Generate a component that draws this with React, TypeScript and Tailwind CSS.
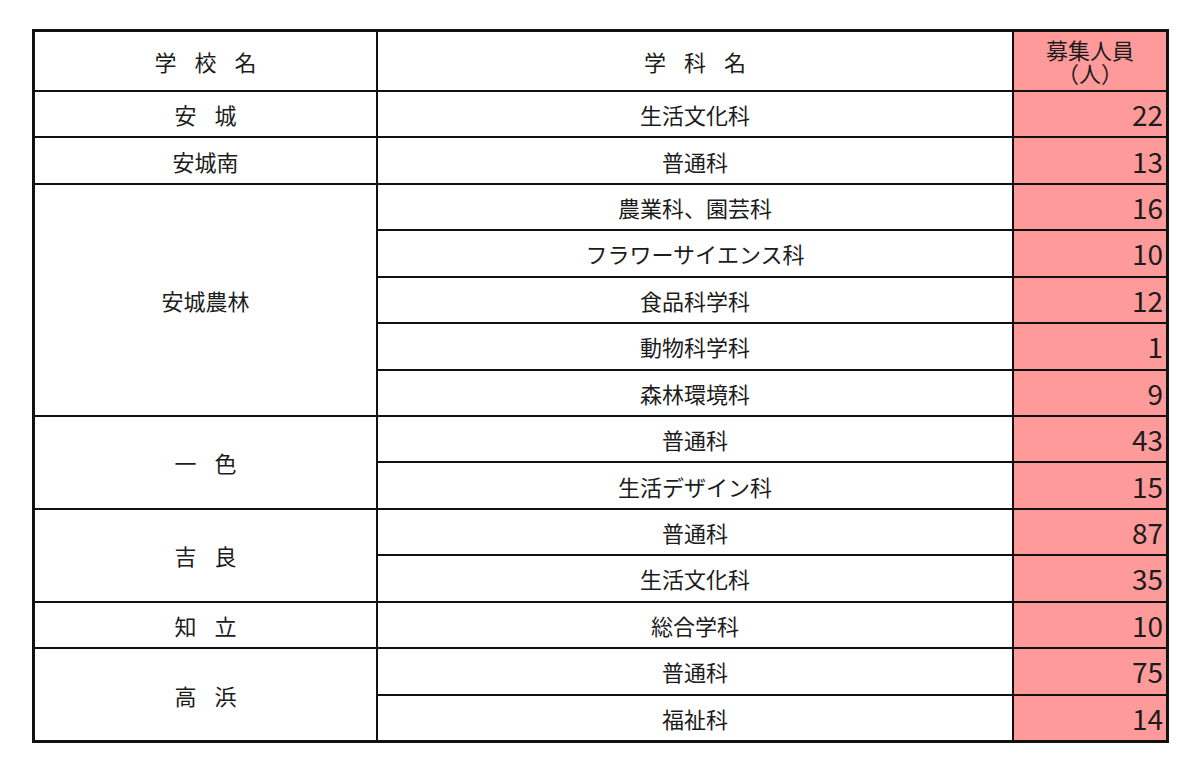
import React from 'react';

type Course = { name: string; count: number };
type School = { name: string; spaced?: boolean; courses: Course[] };

const schools: School[] = [
  { name: '安城', spaced: true, courses: [{ name: '生活文化科', count: 22 }] },
  { name: '安城南', courses: [{ name: '普通科', count: 13 }] },
  {
    name: '安城農林',
    courses: [
      { name: '農業科、園芸科', count: 16 },
      { name: 'フラワーサイエンス科', count: 10 },
      { name: '食品科学科', count: 12 },
      { name: '動物科学科', count: 1 },
      { name: '森林環境科', count: 9 },
    ],
  },
  {
    name: '一色',
    spaced: true,
    courses: [
      { name: '普通科', count: 43 },
      { name: '生活デザイン科', count: 15 },
    ],
  },
  {
    name: '吉良',
    spaced: true,
    courses: [
      { name: '普通科', count: 87 },
      { name: '生活文化科', count: 35 },
    ],
  },
  { name: '知立', spaced: true, courses: [{ name: '総合学科', count: 10 }] },
  {
    name: '高浜',
    spaced: true,
    courses: [
      { name: '普通科', count: 75 },
      { name: '福祉科', count: 14 },
    ],
  },
];

const spanClass: Record<number, string> = {
  1: 'row-span-1',
  2: 'row-span-2',
  5: 'row-span-5',
};

const Spaced = ({ text }: { text: string }) => (
  <div className="flex gap-[18px]">
    {text.split('').map((c, i) => (
      <span key={i}>{c}</span>
    ))}
  </div>
);

export default function App() {
  return (
    <div className="min-h-[774px] bg-white pt-[29px] pl-[32px] text-[22px] text-[#1c1c1c] [font-family:'Noto_Sans_CJK_JP','Noto_Sans',sans-serif]">
      <div className="grid h-[714px] w-[1137px] grid-cols-[341px_634px_152px] grid-rows-[58px_repeat(14,minmax(0,1fr))] gap-[2px] bg-[#111] p-[3px] leading-none">
        <div className="col-start-1 flex items-center justify-center bg-white">
          <Spaced text="学校名" />
        </div>
        <div className="col-start-2 flex items-center justify-center bg-white">
          <Spaced text="学科名" />
        </div>
        <div className="col-start-3 flex flex-col items-center bg-[#ff9a9a] pt-[6px] leading-[23px]">
          <span>募集人員</span>
          <span>（人）</span>
        </div>

        {schools.map((s) => (
          <React.Fragment key={s.name}>
            <div
              className={`col-start-1 flex items-center justify-center bg-white ${spanClass[s.courses.length]}`}
            >
              {s.spaced ? <Spaced text={s.name} /> : s.name}
            </div>
            {s.courses.map((c, i) => (
              <React.Fragment key={i}>
                <div className="col-start-2 flex items-center justify-center bg-white">{c.name}</div>
                <div className="col-start-3 flex items-center justify-end bg-[#ff9a9a] pr-[3px] text-[28px]">
                  {c.count}
                </div>
              </React.Fragment>
            ))}
          </React.Fragment>
        ))}
      </div>
    </div>
  );
}
